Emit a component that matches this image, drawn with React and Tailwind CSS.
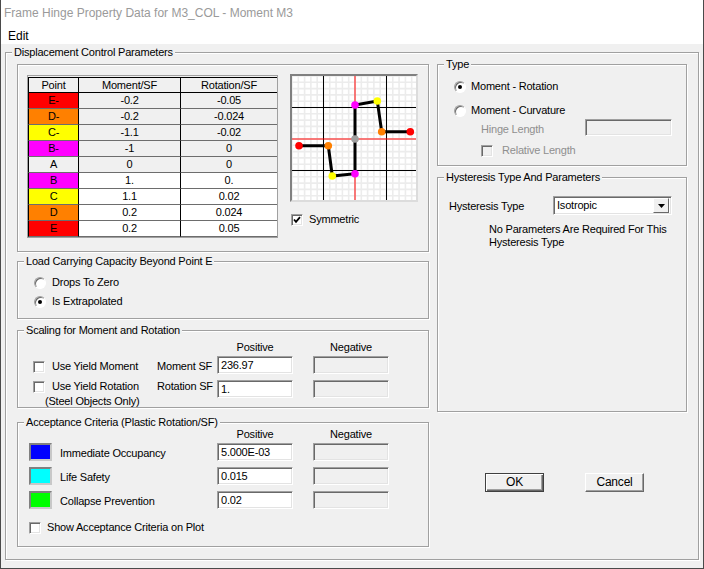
import React from "react";

const sunken =
  "border border-t-[#a0a0a0] border-l-[#a0a0a0] border-r-white border-b-white shadow-[inset_1px_1px_0_#696969,inset_-1px_-1px_0_#e3e3e3]";

const Group = ({ title, className, children }) => (
  <div
    className={`relative border border-[#a0a0a0] shadow-[inset_1px_1px_0_#fff,1px_1px_0_#fff] ${className}`}
  >
    {title && (
      <span className="absolute -top-[7px] left-[6px] bg-[#f0f0f0] px-[2px] leading-[13px] whitespace-nowrap">
        {title}
      </span>
    )}
    {children}
  </div>
);

const Check = ({ checked, disabled }) => (
  <div
    className={`w-[12px] h-[12px] shrink-0 flex items-center justify-center ${sunken} ${
      disabled ? "bg-[#f0f0f0]" : "bg-white"
    }`}
  >
    {checked && (
      <svg width="8" height="8" viewBox="0 0 8 8">
        <path d="M1 3.5 L3 5.8 L7 1.2" fill="none" stroke="#000" strokeWidth="1.8" />
      </svg>
    )}
  </div>
);

const Radio = ({ checked }) => (
  <div className="w-[12px] h-[12px] shrink-0 rounded-full flex items-center justify-center bg-white border border-t-[#a0a0a0] border-l-[#a0a0a0] border-r-white border-b-white shadow-[inset_1px_1px_0_#696969]">
    {checked && <div className="w-[4px] h-[4px] rounded-full bg-black" />}
  </div>
);

const Field = ({ value, disabled, className = "" }) => (
  <div
    className={`h-[18px] w-[76px] shrink-0 pl-[3px] flex items-center ${sunken} ${
      disabled ? "bg-[#f0f0f0]" : "bg-white"
    } ${className}`}
  >
    {value}
  </div>
);

const rows = [
  { p: "E-", m: "-0.2", r: "-0.05", c: "bg-[#ff0000]", ro: true },
  { p: "D-", m: "-0.2", r: "-0.024", c: "bg-[#ff8000]", ro: true },
  { p: "C-", m: "-1.1", r: "-0.02", c: "bg-[#ffff00]", ro: true },
  { p: "B-", m: "-1", r: "0", c: "bg-[#ff00ff]", ro: true },
  { p: "A", m: "0", r: "0", c: "bg-[#f0f0f0]", ro: true },
  { p: "B", m: "1.", r: "0.", c: "bg-[#ff00ff]" },
  { p: "C", m: "1.1", r: "0.02", c: "bg-[#ffff00]" },
  { p: "D", m: "0.2", r: "0.024", c: "bg-[#ff8000]" },
  { p: "E", m: "0.2", r: "0.05", c: "bg-[#ff0000]" },
];

const cell = "h-[16px] flex items-center justify-center border-b border-b-[#6d6d6d]";

const PointTable = () => (
  <div className="w-[251px] border border-[#a0a0a0] bg-[#f0f0f0] pt-px mt-[1px] shrink-0">
    <div className="grid grid-cols-[51px_102px_96px]">
      <div className={`${cell} border-t border-t-black border-l border-l-black border-r border-r-black border-b-black`}>Point</div>
      <div className={`${cell} border-t border-t-black border-r border-r-black border-b-black`}>Moment/SF</div>
      <div className={`${cell} border-t border-t-black border-b-black`}>Rotation/SF</div>
      {rows.map((row) => (
        <React.Fragment key={row.p}>
          <div className={`${cell} ${row.c} border-l border-l-black border-r border-r-black`}>{row.p}</div>
          <div className={`${cell} border-r border-r-black ${row.ro ? "bg-[#f0f0f0]" : "bg-white"}`}>{row.m}</div>
          <div className={`${cell} ${row.ro ? "bg-[#f0f0f0]" : "bg-white"}`}>{row.r}</div>
        </React.Fragment>
      ))}
    </div>
  </div>
);

const pts = [
  [7, 69.7, "#ff0000"],
  [36.3, 69.7, "#ff8000"],
  [40.3, 100, "#ffff00"],
  [63, 97.7, "#ff00ff"],
  [63, 63, "#a0a0a0"],
  [63, 29, "#ff00ff"],
  [85.3, 25, "#ffff00"],
  [89.7, 55.7, "#ff8000"],
  [118.3, 55.7, "#ff0000"],
];

const minor = Array.from({ length: 21 }, (_, i) => 63 + (i - 10) * 6.3);

const Plot = () => (
  <div className="w-[128px] h-[128px] border-2 border-t-[#808080] border-l-[#808080] border-r-[#dcdcdc] border-b-[#dcdcdc] bg-white">
    <svg width="124" height="124" viewBox="0 0 124 124">
      {minor.map((v, i) => (
        <g key={i} stroke="#ececec" strokeWidth="1.6">
          <line x1={v} y1="0" x2={v} y2="124" />
          <line x1="0" y1={v} x2="124" y2={v} />
        </g>
      ))}
      <g stroke="#000" strokeWidth="1">
        <line x1="31.5" y1="0" x2="31.5" y2="124" />
        <line x1="94.5" y1="0" x2="94.5" y2="124" />
        <line x1="0" y1="31.5" x2="124" y2="31.5" />
        <line x1="0" y1="94.5" x2="124" y2="94.5" />
      </g>
      <g stroke="#ff0000" strokeWidth="1">
        <line x1="63" y1="0" x2="63" y2="124" />
        <line x1="0" y1="63" x2="124" y2="63" />
      </g>
      <polyline
        points={pts.map((p) => `${p[0]},${p[1]}`).join(" ")}
        fill="none"
        stroke="#000"
        strokeWidth="3"
      />
      {pts.map((p, i) => (
        <circle key={i} cx={p[0]} cy={p[1]} r="3.8" fill={p[2]} />
      ))}
    </svg>
  </div>
);

const Swatch = ({ color }) => (
  <div className={`w-[23px] h-[18px] shrink-0 border-2 border-t-[#808080] border-l-[#808080] border-r-[#c8c8c8] border-b-[#c8c8c8] ${color}`} />
);

const Button = ({ label, def }) => (
  <div
    className={`w-[59px] h-[19px] flex items-center justify-center text-[12px] ${
      def
        ? "border border-[#404040] shadow-[inset_1px_1px_0_#fff,inset_-1px_-1px_0_#696969,inset_-2px_-2px_0_#a0a0a0]"
        : "border border-t-white border-l-white border-r-[#696969] border-b-[#696969] shadow-[inset_-1px_-1px_0_#a0a0a0]"
    }`}
  >
    {label}
  </div>
);

export default function App() {
  return (
    <div className="w-[704px] h-[569px] bg-[#f0f0f0] border-x border-b border-[#4a4a4a] font-['Liberation_Sans',Arial,sans-serif] text-[11px] leading-[13px] tracking-[-0.2px] text-black flex flex-col overflow-hidden">
      <div className="h-[28px] shrink-0 bg-white pl-[3px] pt-[6px] text-[12px] leading-[14px] tracking-normal text-[#9a9a9a]">
        Frame Hinge Property Data for M3_COL - Moment M3
      </div>
      <div className="h-[16px] shrink-0 bg-white pl-[7px] text-[12px] leading-[16px] tracking-normal">Edit</div>

      <Group
        title="Displacement Control Parameters"
        className="ml-[4px] mt-[8px] w-[694px] h-[508px] shrink-0 pl-[11px] pt-[11px] flex gap-[8px]"
      >
        {/* left column */}
        <div className="w-[412px] flex flex-col">
          <Group className="h-[188px] pl-[9px] pt-[9px] flex items-start">
            <PointTable />
            <div className="ml-[12px] flex flex-col">
              <Plot />
              <div className="mt-[11px] ml-[1px] flex items-center gap-[6px]">
                <Check checked />
                <span>Symmetric</span>
              </div>
            </div>
          </Group>

          <Group title="Load Carrying Capacity Beyond Point E" className="mt-[9px] h-[58px] pl-[16px] pt-[14px]">
            <div className="flex items-center gap-[6px] h-[13px]">
              <Radio />
              <span>Drops To Zero</span>
            </div>
            <div className="flex items-center gap-[6px] h-[13px] mt-[6px]">
              <Radio checked />
              <span>Is Extrapolated</span>
            </div>
          </Group>

          <Group title="Scaling for Moment and Rotation" className="mt-[11px] h-[78px] pl-[15px] pt-[10px]">
            <div className="flex h-[13px]">
              <div className="w-[184px]" />
              <div className="w-[76px] text-center">Positive</div>
              <div className="w-[76px] ml-[20px] text-center">Negative</div>
            </div>
            <div className="flex items-start mt-[2px]">
              <div className="w-[124px] flex items-center gap-[7px] mt-[4px]">
                <Check />
                <span>Use Yield Moment</span>
              </div>
              <div className="w-[60px] mt-[4px]">Moment SF</div>
              <Field value="236.97" />
              <Field disabled className="ml-[20px]" />
            </div>
            <div className="flex items-start mt-[6px]">
              <div className="w-[124px]">
                <div className="flex items-center gap-[7px]">
                  <Check />
                  <span>Use Yield Rotation</span>
                </div>
                <div className="ml-[12px] mt-[2px] whitespace-nowrap">(Steel Objects Only)</div>
              </div>
              <div className="w-[60px]">Rotation SF</div>
              <Field value="1." />
              <Field disabled className="ml-[20px]" />
            </div>
          </Group>

          <Group title="Acceptance Criteria (Plastic Rotation/SF)" className="mt-[14px] h-[125px] pl-[11px] pt-[5px]">
            <div className="flex h-[13px]">
              <div className="w-[188px]" />
              <div className="w-[76px] text-center">Positive</div>
              <div className="w-[76px] ml-[20px] text-center">Negative</div>
            </div>
            {[
              ["bg-[#0000ff]", "Immediate Occupancy", "5.000E-03"],
              ["bg-[#00ffff]", "Life Safety", "0.015"],
              ["bg-[#00ff00]", "Collapse Prevention", "0.02"],
            ].map(([c, label, v], i) => (
              <div key={label} className={`flex items-center ${i === 0 ? "mt-[2px]" : "mt-[6px]"}`}>
                <Swatch color={c} />
                <div className="w-[157px] ml-[8px] mt-[2px]">{label}</div>
                <Field value={v} />
                <Field disabled className="ml-[20px]" />
              </div>
            ))}
            <div className="flex items-center gap-[6px] mt-[12px] h-[13px]">
              <Check />
              <span>Show Acceptance Criteria on Plot</span>
            </div>
          </Group>
        </div>

        {/* right column */}
        <div className="w-[250px] flex flex-col">
          <Group title="Type" className="h-[102px] pl-[16px] pt-[15px]">
            <div className="flex items-center gap-[5px] h-[13px]">
              <Radio checked />
              <span>Moment - Rotation</span>
            </div>
            <div className="flex items-center gap-[5px] h-[13px] mt-[11px]">
              <Radio />
              <span>Moment - Curvature</span>
            </div>
            <div className="flex items-center mt-[2px] ml-[27px] text-[#8f8f8f]">
              <div className="w-[104px] mt-[3px]">Hinge Length</div>
              <div className={`w-[87px] h-[17px] bg-[#f0f0f0] ${sunken}`} />
            </div>
            <div className="flex items-center gap-[9px] mt-[8px] ml-[27px] h-[13px] text-[#8f8f8f]">
              <Check disabled />
              <span>Relative Length</span>
            </div>
          </Group>

          <Group title="Hysteresis Type And Parameters" className="mt-[11px] h-[235px] pl-[11px] pt-[18px]">
            <div className="flex items-center">
              <div className="w-[104px] mt-[1px]">Hysteresis Type</div>
              <div className={`w-[119px] h-[19px] bg-white flex items-center justify-between pl-[3px] pr-[2px] ${sunken}`}>
                <span>Isotropic</span>
                <div className="w-[16px] h-[15px] bg-[#f0f0f0] flex items-center justify-center border border-t-white border-l-white border-r-[#696969] border-b-[#696969]">
                  <svg width="7" height="4" viewBox="0 0 7 4">
                    <path d="M0 0 H7 L3.5 4 Z" fill="#000" />
                  </svg>
                </div>
              </div>
            </div>
            <div className="ml-[40px] mt-[8px]">
              <div>No Parameters Are Required For This</div>
              <div>Hysteresis Type</div>
            </div>
          </Group>

          <div className="mt-[61px] ml-[48px] flex gap-[41px]">
            <Button label="OK" def />
            <Button label="Cancel" />
          </div>
        </div>
      </Group>
    </div>
  );
}
